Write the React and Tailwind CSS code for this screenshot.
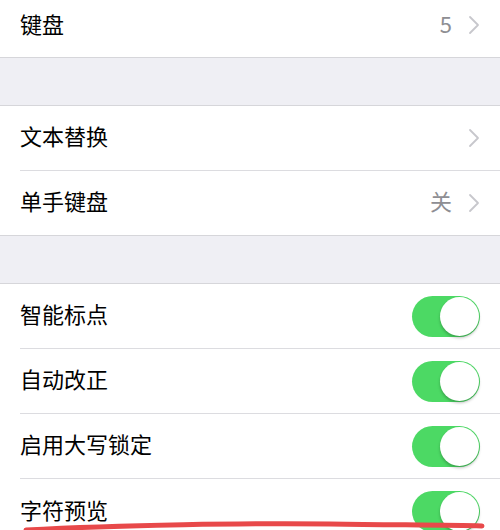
import React from 'react';

const font = { fontFamily: '"Noto Sans CJK SC", "Noto Sans", sans-serif' };

function Chevron() {
    return (
        <svg width="12" height="20" viewBox="0 0 12 20" className="ml-4">
            <path d="M2 2 L10 10 L2 18" fill="none" stroke="#c7c7cc" strokeWidth="1.8" strokeLinecap="round" strokeLinejoin="round" />
        </svg>
    );
}

function Toggle() {
    return (
        <div className="w-[68px] h-[41px] rounded-full bg-[#4cd964] flex items-center justify-end pr-[1px]">
            <div className="w-[39px] h-[39px] rounded-full bg-white shadow-[0_2px_3px_rgba(0,0,0,0.25)]" />
        </div>
    );
}

function Row({ label, value, chevron, toggle, last, height = 'h-[65px]' }) {
    return (
        <div className={`${height} pl-5 flex`}>
            <div className={`flex-1 flex items-center pr-5 ${last ? '' : 'border-b border-[#dcdce0]'}`}>
                <span className="text-[22px] text-black flex-1 pb-[5px]">{label}</span>
                {value && <span className="text-[22px] text-[#8e8e93] pb-[5px]">{value}</span>}
                {chevron && <Chevron />}
                {toggle && <Toggle />}
            </div>
        </div>
    );
}

export default function App() {
    return (
        <div className="relative w-[500px] h-[530px] overflow-hidden bg-[#efeff4]" style={font}>
            <div className="bg-white border-b border-[#d6d6da] h-[58px] pl-5 pr-5 flex items-center pb-2">
                <span className="text-[22px] text-black flex-1 pb-[3px]">键盘</span>
                <span className="text-[22px] text-[#8e8e93] pb-[3px]">5</span>
                <Chevron />
            </div>
            <div className="h-[47px]" />
            <div className="bg-white border-y border-[#d6d6da]">
                <Row label="文本替换" chevron />
                <Row label="单手键盘" value="关" chevron last height="h-[64px]" />
            </div>
            <div className="h-[47px]" />
            <div className="bg-white border-t border-[#d6d6da]">
                <Row label="智能标点" toggle />
                <Row label="自动改正" toggle />
                <Row label="启用大写锁定" toggle />
                <Row label="字符预览" toggle last />
            </div>
            <svg className="absolute left-0 top-[512px]" width="500" height="18" viewBox="0 0 500 18">
                <path d="M26 18 C 120 13, 250 11, 330 12 C 400 13, 450 13, 482 14" fill="none" stroke="#e8494a" strokeWidth="5" strokeLinecap="round" />
            </svg>
        </div>
    );
}
